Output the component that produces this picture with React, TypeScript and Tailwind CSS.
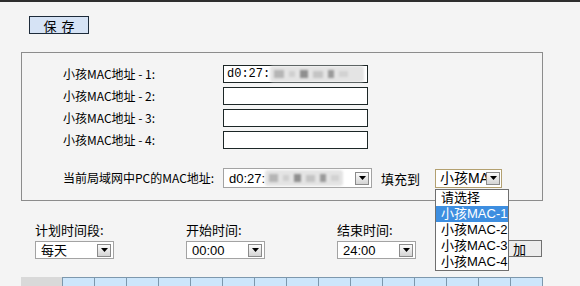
import React from 'react';

function Arrow() {
  return (
    <span className="flex h-[13px] w-[14px] shrink-0 items-center justify-center border border-[#8a8a8a] bg-gradient-to-b from-[#fbfbfb] to-[#d4d4d4]">
      <svg width="7" height="4" viewBox="0 0 7 4"><path d="M0 0h7L3.5 4z" fill="#000" /></svg>
    </span>
  );
}

function Blur({ className }: { className: string }) {
  return (
    <span className={'flex items-center gap-[5px] rounded-[3px] bg-[#e4e4e4] px-[4px] blur-[1.2px] ' + className}>
      <span className="h-[8px] w-[10px] bg-[#b5b5b5]" />
      <span className="h-[6px] w-[6px] bg-[#cfcfcf]" />
      <span className="h-[8px] w-[8px] bg-[#8f8f8f]" />
      <span className="h-[7px] w-[10px] bg-[#c4c4c4]" />
      <span className="h-[8px] w-[6px] bg-[#9a9a9a]" />
      <span className="h-[6px] w-[9px] bg-[#d2d2d2]" />
    </span>
  );
}

function Select({ text, w }: { text: string; w: string }) {
  return (
    <div className={'flex h-[18px] items-center justify-between border border-[#a3a3a3] bg-white pl-[5px] pr-[2px] ' + w}>
      <span className="overflow-hidden whitespace-nowrap font-['Liberation_Sans','Noto_Sans_CJK_SC',sans-serif] text-[13px] leading-none">
        {text}
      </span>
      <Arrow />
    </div>
  );
}

export default function App() {
  const opciones = ['请选择', '小孩MAC-1', '小孩MAC-2', '小孩MAC-3', '小孩MAC-4'];
  return (
    <div className="relative h-[286px] w-[580px] overflow-hidden border-t-2 border-[#2e2e2e] bg-[#f4f4f4] font-['Noto_Sans_CJK_SC',sans-serif] text-[12px] text-black">
      <div className="pl-[29px] pt-[14px]">
        <button className="flex h-[18px] w-[60px] items-center justify-center gap-[5px] border border-[#1d2b3a] bg-[#d6e3f5] text-[13px] leading-none">
          <span>保</span>
          <span>存</span>
        </button>
      </div>

      <div className="ml-[21px] mt-[18px] h-[149px] w-[522px] border border-[#8c8c8c] pl-[41px] pt-[12px]">
        <div className="flex flex-col gap-[4px]">
          {[1, 2, 3, 4].map(n => (
            <div key={n} className="flex h-[18px] items-center">
              <span className="w-[160px] whitespace-pre leading-none">小孩MAC地址 - {n}:</span>
              <div className="flex h-[18px] w-[145px] items-center border border-[#1c2626] bg-white pl-[3px]">
                {n === 1 && (
                  <>
                    <span className="font-['Liberation_Mono',monospace] text-[12px] leading-none">d0:27:</span>
                    <Blur className="h-[16px] w-[94px]" />
                  </>
                )}
              </div>
            </div>
          ))}
        </div>

        <div className="mt-[19px] flex h-[20px] items-center">
          <span className="w-[160px] leading-none">当前局域网中PC的MAC地址:</span>
          <div className="flex h-[20px] w-[149px] items-center justify-between border border-[#a3a3a3] bg-white pl-[5px] pr-[2px]">
            <span className="flex items-center font-['Liberation_Sans',sans-serif] text-[13px] leading-none">
              d0:27:
              <Blur className="h-[16px] w-[78px]" />
            </span>
            <Arrow />
          </div>
          <span className="ml-[9px] w-[54px] text-[13px] leading-none">填充到</span>
          <div className="flex h-[19px] w-[67px] items-center justify-between border border-[#b3a070] bg-white pl-[4px] pr-[1px]">
            <span className="overflow-hidden whitespace-nowrap font-['Liberation_Sans','Noto_Sans_CJK_SC',sans-serif] text-[14px] leading-none">小孩MA</span>
            <Arrow />
          </div>
        </div>
      </div>

      <div className="flex items-start pl-[35px] pt-[21px]">
        <div className="flex w-[151px] flex-col gap-[3px]">
          <span className="text-[13px] leading-[16px]">计划时间段:</span>
          <Select text="每天" w="w-[79px]" />
        </div>
        <div className="flex w-[151px] flex-col gap-[3px]">
          <span className="text-[13px] leading-[16px]">开始时间:</span>
          <Select text="00:00" w="w-[79px]" />
        </div>
        <div className="flex w-[143px] flex-col gap-[3px]">
          <span className="text-[13px] leading-[16px]">结束时间:</span>
          <Select text="24:00" w="w-[79px]" />
        </div>
        <button className="mt-[18px] flex h-[17px] w-[62px] items-center justify-center gap-[4px] border border-[#707070] bg-[#ececec] text-[13px] leading-none">
          <span>添</span>
          <span>加</span>
        </button>
      </div>

      <div className="ml-[21px] mt-[18px] flex h-[12px]">
        <div className="w-[41px] bg-[#d9d9d9]" />
        <div className="flex border-r border-[#7d98ad]">
          {Array.from({ length: 15 }).map((_, i) => (
            <div key={i} className="h-[12px] w-[32px] border-l border-t border-[#7d98ad] bg-[#cde6fb]" />
          ))}
        </div>
      </div>

      <div className="absolute left-[435px] top-[187px] w-[74px] overflow-hidden border border-[#6f6f6f] bg-white font-['Liberation_Sans','Noto_Sans_CJK_SC',sans-serif] text-[13px]">
        {opciones.map((o, i) => (
          <div key={o} className={'h-[16px] whitespace-nowrap pl-[5px] leading-[16px] ' + (i === 1 ? 'bg-[#3d8ee0] text-white' : 'text-black')}>
            {o}
          </div>
        ))}
      </div>
    </div>
  );
}
